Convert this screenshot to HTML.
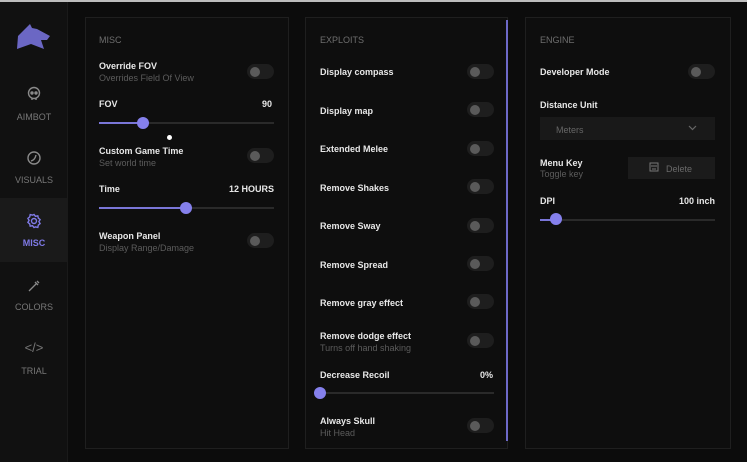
<!DOCTYPE html><html><head><style>
*{margin:0;padding:0;box-sizing:border-box}
body{width:747px;height:462px;background:#0c0c0c;font-family:"Liberation Sans",sans-serif;position:relative;overflow:hidden;color:#e6e6e6}
.a{position:absolute}
.side{left:0;top:2px;width:68px;height:460px;background:#111;border-right:1px solid #1a1a1a}
.nav{left:0;width:68px;text-align:center;font-size:9px;color:#777}
.panel{background:#0e0e0e;border:1px solid #1f1f1f;top:17px;height:432px}
.h{font-size:9px;color:#6e6e6e;top:20px}
.t{font-size:9px;font-weight:bold;color:#e8e8e8}
.s{font-size:9px;color:#5c5c5c}
.tg{width:27px;height:15px;border-radius:8px;background:#1e1e1e}
.tg:after{content:"";position:absolute;left:3px;top:2.5px;width:10px;height:10px;border-radius:50%;background:#5a5a5a}
.tr{height:2px;background:#2a2a2a}
.fill{height:2px;background:#7a76d8}
.k{width:12px;height:12px;border-radius:50%;background:#8580ec}
</style></head><body>
<div class="a" style="left:0;top:0;width:747px;height:2px;background:#bdbdbd"></div>
<div class="a side"></div>
<svg class="a" style="left:17px;top:23px" width="34" height="28" viewBox="0 0 34 28"><path d="M0 26 L1 13 L13 1 L15 5 L20 6 L33 13 L30 17 L24 17 L27 26 L14 21 Z" fill="#6b67c4"/></svg>
<svg class="a" style="left:26px;top:86px" width="16" height="16" viewBox="0 0 16 16" fill="none" stroke="#8a8a8a" stroke-width="1.4"><circle cx="8" cy="7" r="5.5"/><circle cx="6" cy="7" r="1" fill="#8a8a8a"/><circle cx="10" cy="7" r="1" fill="#8a8a8a"/><path d="M6 12v2M10 12v2"/></svg>
<div class="a nav" style="top:112px">AIMBOT</div>
<svg class="a" style="left:26px;top:150px" width="16" height="16" viewBox="0 0 16 16" fill="none" stroke="#8a8a8a" stroke-width="1.4"><circle cx="8" cy="8" r="6"/><path d="M5 11 Q9 10 10 5"/></svg>
<div class="a nav" style="top:175px">VISUALS</div>
<div class="a" style="left:0;top:198px;width:68px;height:64px;background:#1a1a1a"></div>
<svg class="a" style="left:26px;top:213px" width="16" height="16" viewBox="0 0 16 16" fill="none" stroke="#7f7ae6" stroke-width="1.4"><circle cx="8" cy="8" r="2.5"/><path d="M8 1.5l1.5 1.8 2.3-.5.5 2.3 1.8 1.5-1.2 2 1.2 2-1.8 1.5-.5 2.3-2.3-.5L8 14.5l-1.5-1.8-2.3.5-.5-2.3L1.9 9.4l1.2-2-1.2-2 1.8-1.5.5-2.3 2.3.5z"/></svg>
<div class="a nav" style="top:238px;color:#7f7ae6;font-weight:bold">MISC</div>
<svg class="a" style="left:27px;top:279px" width="14" height="14" viewBox="0 0 14 14" fill="none" stroke="#8a8a8a" stroke-width="1.3"><path d="M2 12 L9 5 M8 3l3 3M10 2l2 2"/></svg>
<div class="a nav" style="top:302px">COLORS</div>
<div class="a nav" style="top:340px;font-size:13px">&lt;/&gt;</div>
<div class="a nav" style="top:366px">TRIAL</div>

<div class="a panel" style="left:85px;width:204px"></div>
<div class="a h" style="left:99px;top:35px">MISC</div>
<div class="a t" style="left:99px;top:61px">Override FOV</div><div class="a s" style="left:99px;top:73px">Overrides Field Of View</div><div class="a tg" style="left:247px;top:64px"></div>
<div class="a t" style="left:99px;top:99px">FOV</div><div class="a t" style="left:262px;top:99px">90</div>
<div class="a tr" style="left:99px;top:122px;width:175px"></div><div class="a fill" style="left:99px;top:122px;width:44px"></div><div class="a k" style="left:137px;top:117px"></div>
<div class="a" style="left:167px;top:135px;width:5px;height:5px;border-radius:50%;background:#fff"></div>
<div class="a t" style="left:99px;top:146px">Custom Game Time</div><div class="a s" style="left:99px;top:158px">Set world time</div><div class="a tg" style="left:247px;top:148px"></div>
<div class="a t" style="left:99px;top:184px">Time</div><div class="a t" style="left:229px;top:184px">12 HOURS</div>
<div class="a tr" style="left:99px;top:207px;width:175px"></div><div class="a fill" style="left:99px;top:207px;width:87px"></div><div class="a k" style="left:180px;top:202px"></div>
<div class="a t" style="left:99px;top:231px">Weapon Panel</div><div class="a s" style="left:99px;top:243px">Display Range/Damage</div><div class="a tg" style="left:247px;top:233px"></div>

<div class="a panel" style="left:305px;width:203px"></div>
<div class="a" style="left:506px;top:20px;width:2px;height:421px;background:#6d69c8"></div>
<div class="a h" style="left:320px;top:35px">EXPLOITS</div>
<div class="a t" style="left:320px;top:67px">Display compass</div><div class="a tg" style="left:467px;top:64px"></div>
<div class="a t" style="left:320px;top:106px">Display map</div><div class="a tg" style="left:467px;top:102px"></div>
<div class="a t" style="left:320px;top:144px">Extended Melee</div><div class="a tg" style="left:467px;top:141px"></div>
<div class="a t" style="left:320px;top:183px">Remove Shakes</div><div class="a tg" style="left:467px;top:179px"></div>
<div class="a t" style="left:320px;top:221px">Remove Sway</div><div class="a tg" style="left:467px;top:218px"></div>
<div class="a t" style="left:320px;top:260px">Remove Spread</div><div class="a tg" style="left:467px;top:256px"></div>
<div class="a t" style="left:320px;top:298px">Remove gray effect</div><div class="a tg" style="left:467px;top:294px"></div>
<div class="a t" style="left:320px;top:331px">Remove dodge effect</div><div class="a s" style="left:320px;top:343px">Turns off hand shaking</div><div class="a tg" style="left:467px;top:333px"></div>
<div class="a t" style="left:320px;top:370px">Decrease Recoil</div><div class="a t" style="left:480px;top:370px">0%</div>
<div class="a tr" style="left:320px;top:392px;width:174px"></div><div class="a k" style="left:314px;top:387px"></div>
<div class="a t" style="left:320px;top:416px">Always Skull</div><div class="a s" style="left:320px;top:428px">Hit Head</div><div class="a tg" style="left:467px;top:418px"></div>

<div class="a panel" style="left:525px;width:206px"></div>
<div class="a h" style="left:540px;top:35px">ENGINE</div>
<div class="a t" style="left:540px;top:67px">Developer Mode</div><div class="a tg" style="left:688px;top:64px"></div>
<div class="a t" style="left:540px;top:100px">Distance Unit</div>
<div class="a" style="left:540px;top:117px;width:175px;height:23px;background:#191919"></div>
<div class="a s" style="left:556px;top:125px;color:#666">Meters</div>
<svg class="a" style="left:688px;top:125px" width="9" height="6" viewBox="0 0 9 6"><path d="M1 1l3.5 3.5L8 1" stroke="#666" fill="none" stroke-width="1.2"/></svg>
<div class="a t" style="left:540px;top:158px">Menu Key</div><div class="a s" style="left:540px;top:169px">Toggle key</div>
<div class="a" style="left:628px;top:157px;width:87px;height:22px;background:#1b1b1b"></div>
<svg class="a" style="left:649px;top:162px" width="10" height="10" viewBox="0 0 10 10" fill="none" stroke="#777"><rect x="1" y="1" width="8" height="8"/><path d="M3 7h4M3 3v2M5 3v2M7 3v2"/></svg>
<div class="a s" style="left:666px;top:164px;color:#6a6a6a">Delete</div>
<div class="a t" style="left:540px;top:196px">DPI</div><div class="a t" style="left:679px;top:196px">100 inch</div>
<div class="a tr" style="left:540px;top:219px;width:175px"></div><div class="a fill" style="left:540px;top:219px;width:16px"></div><div class="a k" style="left:550px;top:213px"></div>
</body></html>
